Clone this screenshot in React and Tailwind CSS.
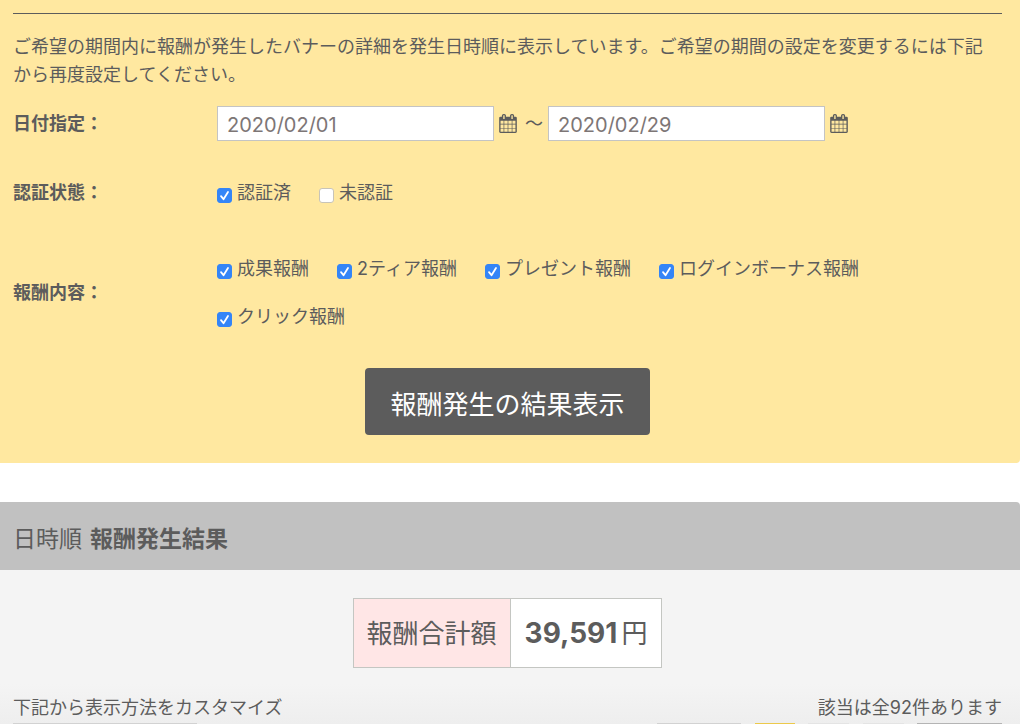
import { useState } from 'react'

const statusOptions = [
  { id: 'approved', label: '認証済', checked: true },
  { id: 'pending', label: '未認証', checked: false },
]

const rewardOptions = [
  { id: 'result', label: '成果報酬', checked: true },
  { id: 'tier2', label: '2ティア報酬', checked: true },
  { id: 'present', label: 'プレゼント報酬', checked: true },
  { id: 'login', label: 'ログインボーナス報酬', checked: true },
  { id: 'click', label: 'クリック報酬', checked: true },
]

const CalendarIcon = () => (
  <svg viewBox="64 0 1664 1792" className="block w-[18px] h-[19px]" fill="currentColor" aria-hidden="true">
    <path d="M192 1664h288v-288h-288v288zm352 0h320v-288h-320v288zm-352-352h288v-320h-288v320zm352 0h320v-320h-320v320zm-352-384h288v-288h-288v288zm736 736h320v-288h-320v288zm-384-736h320v-288h-320v288zm768 736h288v-288h-288v288zm-384-352h320v-320h-320v320zm-352-864v-288q0-13-9.5-22.5t-22.5-9.5h-64q-13 0-22.5 9.5t-9.5 22.5v288q0 13 9.5 22.5t22.5 9.5h64q13 0 22.5-9.5t9.5-22.5zm736 864h288v-320h-288v320zm-384-384h320v-288h-320v288zm384 0h288v-288h-288v288zm32-480v-288q0-13-9.5-22.5t-22.5-9.5h-64q-13 0-22.5 9.5t-9.5 22.5v288q0 13 9.5 22.5t22.5 9.5h64q13 0 22.5-9.5t9.5-22.5zm384-64v1280q0 52-38 90t-90 38h-1408q-52 0-90-38t-38-90v-1280q0-52 38-90t90-38h128v-96q0-66 47-113t113-47h64q66 0 113 47t47 113v96h384v-96q0-66 47-113t113-47h64q66 0 113 47t47 113v96h128q52 0 90 38t38 90z" />
  </svg>
)

const DateField = ({ id, label, value, onChange }) => (
  <div className="flex items-center gap-[5px]">
    <input
      id={id}
      type="text"
      aria-label={label}
      value={value}
      onChange={(e) => onChange(e.target.value)}
      className="w-[277px] h-[35px] border border-[#c4c4c4] bg-white px-[9px] pt-[2px] text-xl text-[#7d7676] outline-none"
    />
    <button type="button" aria-label={`${label}を選択`}>
      <CalendarIcon />
    </button>
  </div>
)

const Check = ({ id, label, checked: initial }) => {
  const [checked, setChecked] = useState(initial)

  return (
    <label htmlFor={id} className="flex items-center gap-[5px] leading-7">
      <span className="grid mt-1">
        <input
          id={id}
          type="checkbox"
          checked={checked}
          onChange={(e) => setChecked(e.target.checked)}
          className="peer col-start-1 row-start-1 appearance-none w-[15px] h-[15px] rounded-[3px] border border-[#c8c4b8] bg-white checked:border-[#3485f7] checked:bg-[#3485f7]"
        />
        <svg
          viewBox="0 0 15 15"
          className="col-start-1 row-start-1 w-[15px] h-[15px] hidden peer-checked:block pointer-events-none"
          fill="none"
          stroke="#fff"
          strokeWidth="1.8"
          strokeLinecap="round"
          strokeLinejoin="round"
        >
          <path d="M4 8.2l2.5 3L11 4" />
        </svg>
      </span>
      <span>{label}</span>
    </label>
  )
}

const App = () => {
  const [from, setFrom] = useState('2020/02/01')
  const [to, setTo] = useState('2020/02/29')

  return (
    <div className="mr-1 bg-white text-lg text-[#5c5c5c] font-['Inter','Noto_Sans_CJK_JP',sans-serif]">
      {/* Search form */}
      <form
        onSubmit={(e) => e.preventDefault()}
        className="rounded-br bg-[#ffe8a0] pt-[13px] pl-[13px] pr-[18px] pb-7"
      >
        <hr className="border-0 h-px bg-[#5c5c5c]" />
        <p className="mt-[19px] pr-3 leading-7">
          ご希望の期間内に報酬が発生したバナーの詳細を発生日時順に表示しています。ご希望の期間の設定を変更するには下記から再度設定してください。
        </p>

        <div className="mt-[17px] flex items-center">
          <label htmlFor="date-from" className="w-[204px] shrink-0 font-bold leading-7">日付指定：</label>
          <div className="flex items-center">
            <DateField id="date-from" label="開始日" value={from} onChange={setFrom} />
            <span className="ml-2 mr-[5px] leading-7">〜</span>
            <DateField id="date-to" label="終了日" value={to} onChange={setTo} />
          </div>
        </div>

        <fieldset className="mt-[38px] flex items-center" aria-labelledby="status-title">
          <div id="status-title" className="w-[204px] shrink-0 font-bold leading-7">認証状態：</div>
          <div className="flex flex-wrap gap-x-7">
            {statusOptions.map((o) => <Check key={o.id} {...o} />)}
          </div>
        </fieldset>

        <fieldset className="mt-12 flex items-center" aria-labelledby="reward-title">
          <div id="reward-title" className="w-[204px] shrink-0 font-bold leading-7">報酬内容：</div>
          <div className="flex flex-wrap gap-x-7 gap-y-5">
            {rewardOptions.map((o) => <Check key={o.id} {...o} />)}
          </div>
        </fieldset>

        <div className="mt-[37px] flex justify-center">
          <button type="submit" className="h-[67px] rounded bg-[#5c5c5c] px-[25px] pt-2 text-[26px] text-white">
            報酬発生の結果表示
          </button>
        </div>
      </form>

      {/* Results */}
      <section className="mt-[39px] rounded-tr overflow-hidden">
        <h2 className="h-[68px] flex items-center gap-2 bg-[#c1c1c1] px-[13px] pt-2 text-[23px]">
          <span>日時順</span>
          <strong>報酬発生結果</strong>
        </h2>
        <div className="bg-[#f4f4f4] pt-7">
          <div className="pl-[13px] pr-[18px]">
            <table className="mx-auto border-collapse text-[26px]">
              <tbody>
                <tr className="h-[69px]">
                  <th className="border border-[#c4c6c2] bg-[#ffe6e6] px-[13px] pt-[2px] font-normal">報酬合計額</th>
                  <td className="border border-[#c4c6c2] bg-white px-[14px] pt-[2px]">
                    <div className="flex items-center gap-1">
                      <strong className="text-[28px]">39,591</strong>
                      <span>円</span>
                    </div>
                  </td>
                </tr>
              </tbody>
            </table>
          </div>

          <div className="mt-4 bg-linear-to-b from-[#f4f4f4] to-[#eeeeee] pl-[13px] pr-[18px]">
            <div className="flex justify-between pt-[10px] pb-px leading-7">
              <p>下記から表示方法をカスタマイズ</p>
              <p>該当は全92件あります</p>
            </div>
            {/* Top edges of the sort and paging controls */}
            <div className="flex h-px">
              <div className="w-[184px] bg-[#d2d2d2]" />
              <div className="ml-auto w-[84px] bg-[#d2d2d2]" />
              <div className="ml-[14px] w-10 bg-[#ecc94b]" />
              <div className="ml-[13px] w-[41px] bg-[#e4e4e4]" />
              <div className="ml-[14px] w-[41px] bg-[#e4e4e4]" />
              <div className="ml-[13px] w-[85px] bg-[#b4b4b4]" />
            </div>
          </div>
        </div>
      </section>
    </div>
  )
}

export default App
